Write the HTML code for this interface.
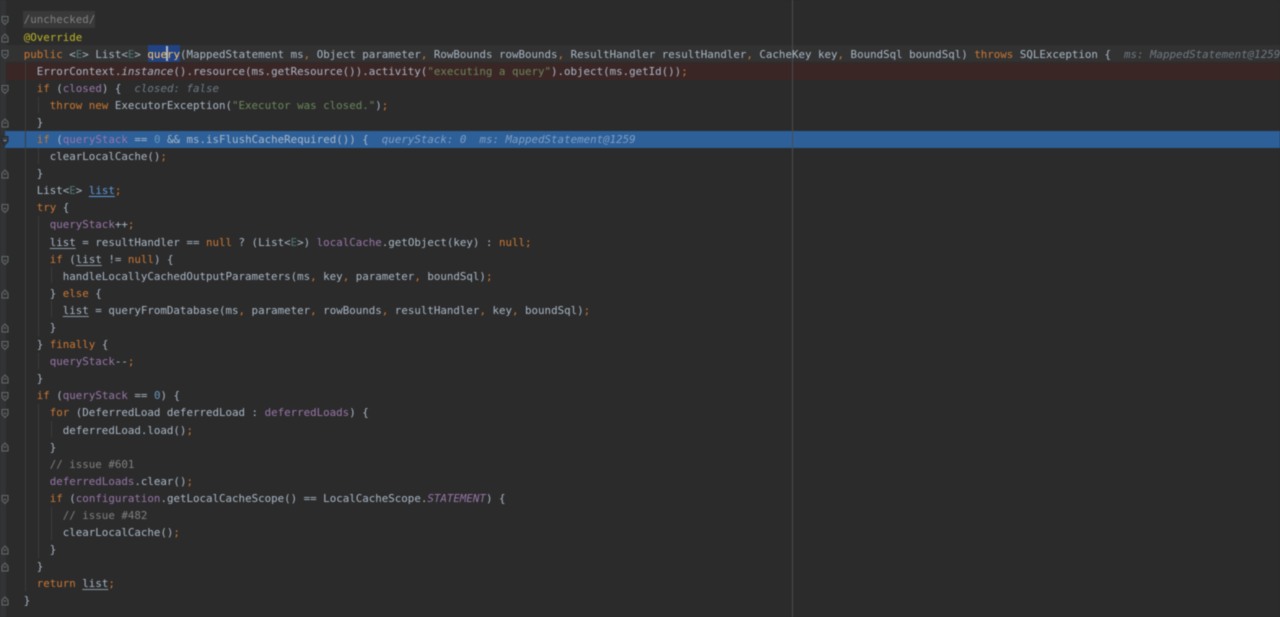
<!DOCTYPE html>
<html>
<head>
<meta charset="utf-8">
<style>
html,body{margin:0;padding:0;background:#2b2b2b;width:1280px;height:617px;overflow:hidden}
#w{position:absolute;left:0;top:0;width:1280px;height:617px;overflow:hidden;background:#2b2b2b;filter:blur(.5px)}
.gut{position:absolute;left:0;top:0;width:6px;height:617px;background:#313335}
.bar{position:absolute;left:6px;right:0;height:17px}
.m{position:absolute;left:792px;top:0;width:1px;height:617px;background:#4c4c4c}
.g{position:absolute;width:1px;background:#3c3c3c}
.r{position:absolute;left:23.7px;height:17px;line-height:17px;white-space:pre;font-family:"DejaVu Sans Mono","Liberation Mono",monospace;font-size:10.825px;color:#a9b7c6;top:calc(11.41px + 17.09px * var(--i))}
.k{color:#cc7832}.f{color:#9876aa}.s{color:#6a8759}.c{color:#808080}.a{color:#bbb529}.n{color:#6897bb}.h{color:#6f7a84;font-style:italic}.t{color:#507874}.i{font-style:italic}
.u{text-decoration:underline;text-underline-offset:2px;text-decoration-color:#8a98a5}
.d{color:#5c9be0;text-decoration:underline;text-underline-offset:2px}
</style>
</head>
<body>
<div id="w">
<div class="bar" style="top:45px;background:#323232"></div>
<div class="bar" style="top:62.5px;background:#3b2626"></div>
<div class="gut"></div>
<div class="bar" style="top:131px;left:5px;background:#2d5f99"></div>
<div style="position:absolute;left:23px;top:11px;width:72px;height:17px;background:#393939"></div>
<div style="position:absolute;left:148px;top:45px;width:32px;height:17px;background:#214283"></div>
<div class="m"></div>

<div class="g" style="left:25px;top:62px;height:529px"></div>
<div class="g" style="left:38px;top:97px;height:16px"></div>
<div class="g" style="left:38px;top:148px;height:16px"></div>
<div class="g" style="left:38px;top:216px;height:120px"></div>
<div class="g" style="left:38px;top:353px;height:16px"></div>
<div class="g" style="left:38px;top:404px;height:154px"></div>
<div class="g" style="left:51px;top:267px;height:16px"></div>
<div class="g" style="left:51px;top:301px;height:16px"></div>
<div class="g" style="left:51px;top:421px;height:16px"></div>
<div class="g" style="left:51px;top:507px;height:33px"></div>

<div class="r" style="--i:0"><span class="c">/unchecked/</span></div>
<div class="r" style="--i:1"><span class="a">@Override</span></div>
<div class="r" style="--i:2"><span class="k">public</span> &lt;<span class="t">E</span>&gt; List&lt;<span class="t">E</span>&gt; <span style="color:#ffc66d">query</span>(MappedStatement ms<span class="k">,</span> Object parameter<span class="k">,</span> RowBounds rowBounds<span class="k">,</span> ResultHandler resultHandler<span class="k">,</span> CacheKey key<span class="k">,</span> BoundSql boundSql) <span class="k">throws</span> SQLException {  <span class="h">ms: MappedStatement@1259</span></div>
<div class="r" style="--i:3">  ErrorContext.<span class="i">instance</span>().resource(ms.getResource()).activity(<span class="s">"executing a query"</span>).object(ms.getId())<span class="k">;</span></div>
<div class="r" style="--i:4">  <span class="k">if</span> (<span class="f">closed</span>) {  <span class="h">closed: false</span></div>
<div class="r" style="--i:5">    <span class="k">throw new</span> ExecutorException(<span class="s">"Executor was closed."</span>)<span class="k">;</span></div>
<div class="r" style="--i:6">  }</div>
<div class="r" style="--i:7">  <span class="k">if</span> (<span class="f">queryStack</span> == <span class="n">0</span> &amp;&amp; ms.isFlushCacheRequired()) {  <span style="color:#7f9fc4;font-style:italic">queryStack: 0  ms: MappedStatement@1259</span></div>
<div class="r" style="--i:8">    clearLocalCache()<span class="k">;</span></div>
<div class="r" style="--i:9">  }</div>
<div class="r" style="--i:10">  List&lt;<span class="t">E</span>&gt; <span class="d">list</span><span class="k">;</span></div>
<div class="r" style="--i:11">  <span class="k">try</span> {</div>
<div class="r" style="--i:12">    <span class="f">queryStack</span>++<span class="k">;</span></div>
<div class="r" style="--i:13">    <span class="u">list</span> = resultHandler == <span class="k">null</span> ? (List&lt;<span class="t">E</span>&gt;) <span class="f">localCache</span>.getObject(key) : <span class="k">null;</span></div>
<div class="r" style="--i:14">    <span class="k">if</span> (<span class="u">list</span> != <span class="k">null</span>) {</div>
<div class="r" style="--i:15">      handleLocallyCachedOutputParameters(ms<span class="k">,</span> key<span class="k">,</span> parameter<span class="k">,</span> boundSql)<span class="k">;</span></div>
<div class="r" style="--i:16">    } <span class="k">else</span> {</div>
<div class="r" style="--i:17">      <span class="u">list</span> = queryFromDatabase(ms<span class="k">,</span> parameter<span class="k">,</span> rowBounds<span class="k">,</span> resultHandler<span class="k">,</span> key<span class="k">,</span> boundSql)<span class="k">;</span></div>
<div class="r" style="--i:18">    }</div>
<div class="r" style="--i:19">  } <span class="k">finally</span> {</div>
<div class="r" style="--i:20">    <span class="f">queryStack</span>--<span class="k">;</span></div>
<div class="r" style="--i:21">  }</div>
<div class="r" style="--i:22">  <span class="k">if</span> (<span class="f">queryStack</span> == <span class="n">0</span>) {</div>
<div class="r" style="--i:23">    <span class="k">for</span> (DeferredLoad deferredLoad : <span class="f">deferredLoads</span>) {</div>
<div class="r" style="--i:24">      deferredLoad.load()<span class="k">;</span></div>
<div class="r" style="--i:25">    }</div>
<div class="r" style="--i:26">    <span class="c">// issue #601</span></div>
<div class="r" style="--i:27">    <span class="f">deferredLoads</span>.clear()<span class="k">;</span></div>
<div class="r" style="--i:28">    <span class="k">if</span> (<span class="f">configuration</span>.getLocalCacheScope() == LocalCacheScope.<span class="f i">STATEMENT</span>) {</div>
<div class="r" style="--i:29">      <span class="c">// issue #482</span></div>
<div class="r" style="--i:30">      clearLocalCache()<span class="k">;</span></div>
<div class="r" style="--i:31">    }</div>
<div class="r" style="--i:32">  }</div>
<div class="r" style="--i:33">  <span class="k">return</span> <span class="u">list</span><span class="k">;</span></div>
<div class="r" style="--i:34">}</div>

<div style="position:absolute;left:166px;top:46px;width:1.5px;height:15px;background:#bbbbbb"></div>

<svg style="position:absolute;left:0;top:0" width="12" height="617" fill="none" stroke="#666a6c" stroke-width="1">
<g transform="translate(0,1)">
<path d="M2 15.5h6v5l-3 3l-3-3z"/><path d="M3.5 19.5h3"/>
<path d="M2 49.5h6v5l-3 3l-3-3z"/><path d="M3.5 53.5h3"/>
<path d="M2 84.5h6v5l-3 3l-3-3z"/><path d="M3.5 88.5h3"/>
<path d="M2 203.5h6v5l-3 3l-3-3z"/><path d="M3.5 207.5h3"/>
<path d="M2 255.5h6v5l-3 3l-3-3z"/><path d="M3.5 259.5h3"/>
<path d="M2 340.5h6v5l-3 3l-3-3z"/><path d="M3.5 344.5h3"/>
<path d="M2 391.5h6v5l-3 3l-3-3z"/><path d="M3.5 395.5h3"/>
<path d="M2 408.5h6v5l-3 3l-3-3z"/><path d="M3.5 412.5h3"/>
<path d="M2 494.5h6v5l-3 3l-3-3z"/><path d="M3.5 498.5h3"/>
<path d="M2 135.5h6v5l-3 3l-3-3z" fill="#3a3c3e" stroke="#1e2a38"/><path d="M3.5 139.5h3" stroke="#8a8f94"/>
</g>
<g transform="translate(0,.5)">
<path d="M2 41.5h6v-5l-3-3l-3 3z"/><path d="M3.5 37.5h3"/>
<path d="M2 126.5h6v-5l-3-3l-3 3z"/><path d="M3.5 122.5h3"/>
<path d="M2 177.5h6v-5l-3-3l-3 3z"/><path d="M3.5 173.5h3"/>
<path d="M2 297.5h6v-5l-3-3l-3 3z"/><path d="M3.5 293.5h3"/>
<path d="M2 331.5h6v-5l-3-3l-3 3z"/><path d="M3.5 327.5h3"/>
<path d="M2 382.5h6v-5l-3-3l-3 3z"/><path d="M3.5 378.5h3"/>
<path d="M2 450.5h6v-5l-3-3l-3 3z"/><path d="M3.5 446.5h3"/>
<path d="M2 553.5h6v-5l-3-3l-3 3z"/><path d="M3.5 549.5h3"/>
<path d="M2 570.5h6v-5l-3-3l-3 3z"/><path d="M3.5 566.5h3"/>
<path d="M2 604.5h6v-5l-3-3l-3 3z"/><path d="M3.5 600.5h3"/>
</g>
</svg>
</div>
</body>
</html>
